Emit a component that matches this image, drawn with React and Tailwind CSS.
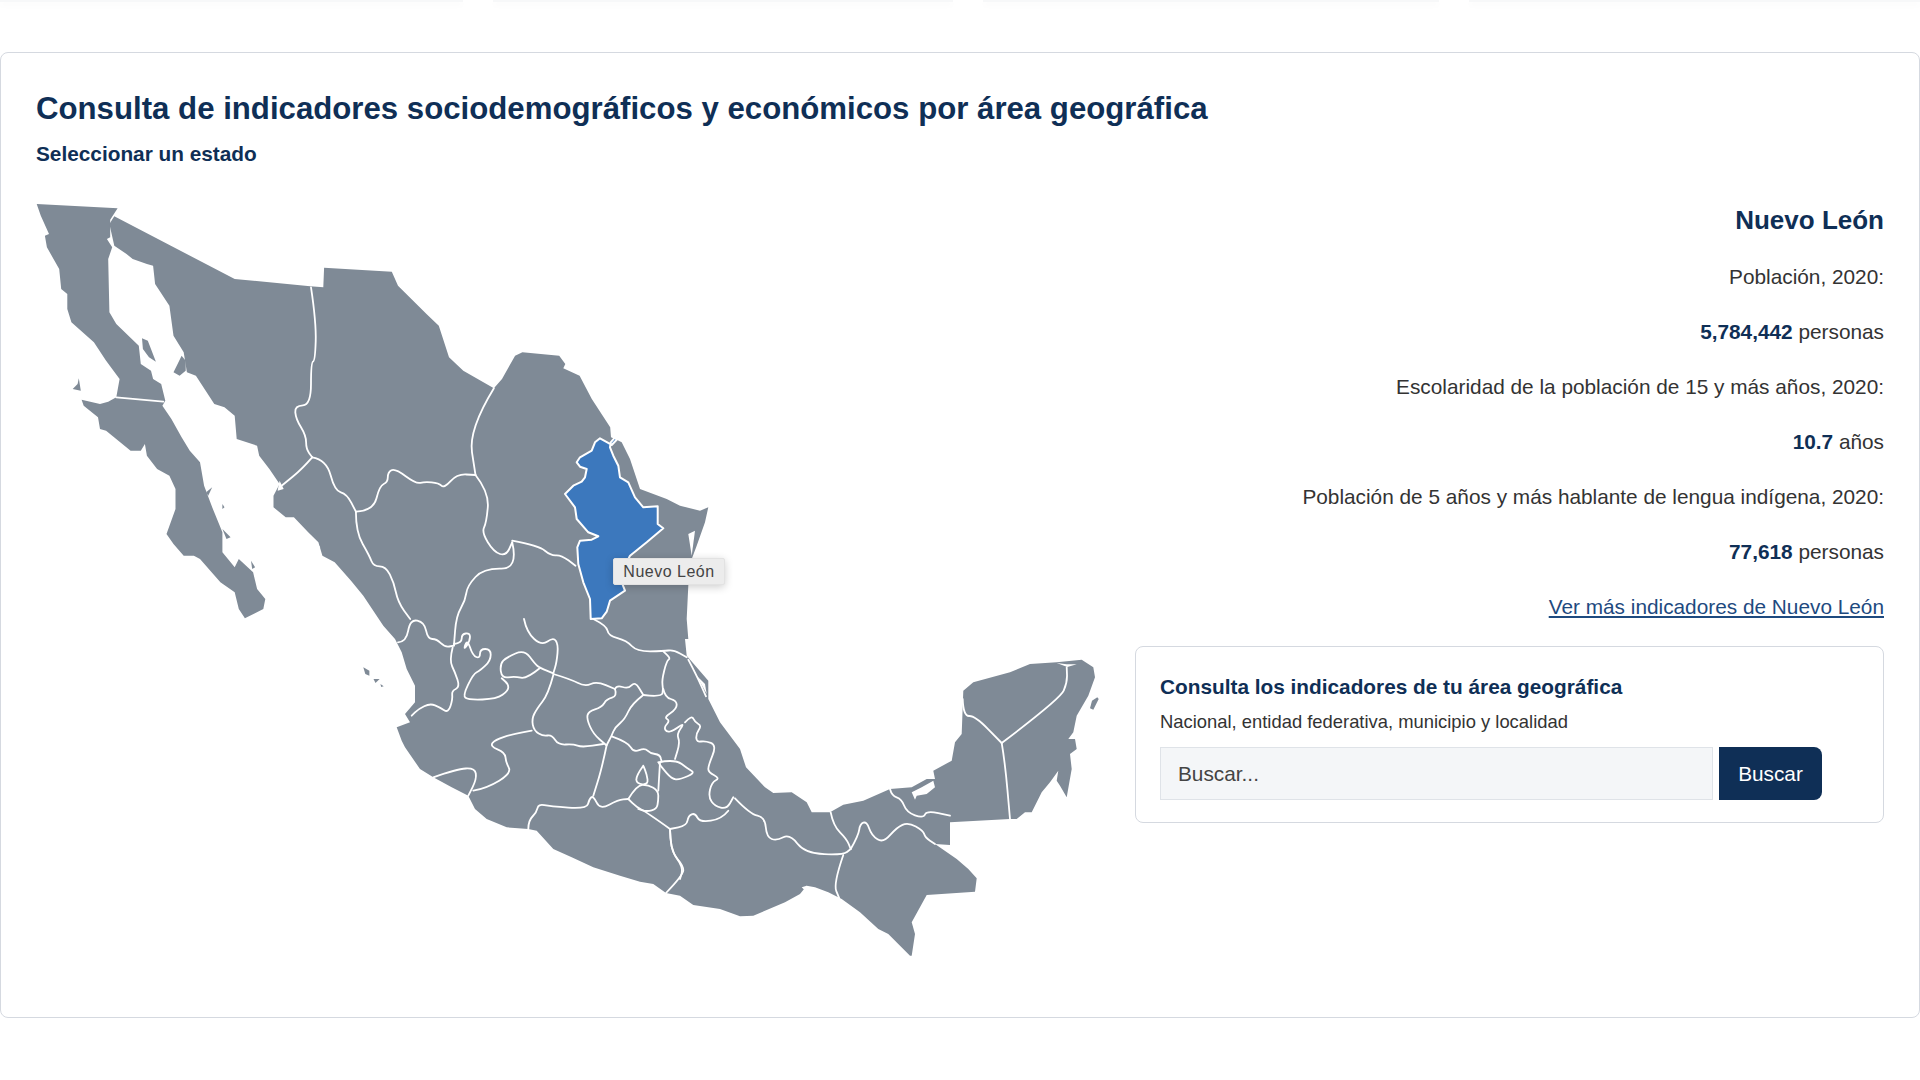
const toPoints = (fx, ox, fy, oy, str) =>
  str.trim().split(/\s+/).map((p) => {
    const [x, y] = p.split(',').map(Number);
    return [ox + x / fx, oy + y / fy];
  });

// Each helper reads points traced on one crop of the map
const a = (s) => toPoints(2.45, 0, 3, 180, s);
const b = (s) => toPoints(3, 380, 3, 620, s);
const c = (s) => toPoints(3, 640, 3, 640, s);
const d = (s) => toPoints(3, 520, 3, 420, s);

const poly = (pts) => 'M' + pts.map((p) => `${p[0].toFixed(1)} ${p[1].toFixed(1)}`).join('L') + 'Z';

// Rounded line through the midpoints
const curve = (pts) => {
  let out = `M${pts[0][0].toFixed(1)} ${pts[0][1].toFixed(1)}`;
  for (let i = 1; i < pts.length - 1; i++) {
    const mx = (pts[i][0] + pts[i + 1][0]) / 2;
    const my = (pts[i][1] + pts[i + 1][1]) / 2;
    out += `Q${pts[i][0].toFixed(1)} ${pts[i][1].toFixed(1)} ${mx.toFixed(1)} ${my.toFixed(1)}`;
  }
  const last = pts[pts.length - 1];
  return out + `L${last[0].toFixed(1)} ${last[1].toFixed(1)}`;
};

const baja = a(`90,75 288,88 270,122 270,175 262,180 275,205 265,240 268,400 285,435 340,500 345,555 370,575 375,600 395,615 405,665
  398,680 420,720 445,775 465,815 490,850 500,920 520,985 545,1060 545,1120 575,1165 585,1140 620,1180 630,1230 650,1260 645,1290
  600,1318 585,1290 575,1240 540,1210 490,1140 475,1130 450,1130 425,1095 408,1065 430,990 430,930 415,890 385,870 360,830 355,795
  345,815 320,815 260,755 245,750 240,715 205,680 200,662 245,675 265,668 285,655 293,600 260,545 230,490 175,430 165,390 165,345
  150,330 145,270 115,205 110,170 120,165 100,110`);

const mainland = [
  ...a(`280,112 575,300 760,322 792,325 794,266 960,278 975,320 1045,405 1075,440 1100,535 1135,575 1210,628 1230,600 1262,530 1280,520
    1370,530 1385,555 1380,568 1420,590 1450,660 1495,745 1497,775`),
  ...d(`290,62 305,70 330,120 360,210 440,240 480,260 540,275 565,265 555,310 530,380 515,420 505,500 500,600 505,660`),
  ...c(`135,0 140,50 205,125 205,180 240,250 300,330 318,385 375,445 400,462 455,460 500,490 515,520 570,520 610,497 670,485 750,450 815,445
    860,420 885,420 880,395 935,365 945,310 965,285 970,155 1000,130 1110,100 1170,75 1250,70 1325,62 1360,85 1365,115 1345,170 1310,230
    1300,280 1285,300 1305,300 1310,330 1290,345 1295,390 1280,475 1260,440 1250,425 1255,395 1230,430 1205,460 1175,520 1155,520 1130,540
    1110,540 930,550 930,618 885,615 950,660 985,690 1010,718 1005,758 860,768 815,850 825,885 815,950 810,950 745,885 715,870 660,820
    605,780 565,760 525,745 500,740 480,765 435,790 340,830 300,832 240,810 160,798 120,770 78,762 40,735 0,728`),
  ...b(`720,770 640,745 575,715 520,690 470,635 445,630 380,625 320,600 285,570 265,530 215,505 160,475 120,450 75,385 65,365 50,325 90,310
    75,285 105,250 105,200 80,150 65,100 45,60 10,20`),
  ...a(`890,1250 860,1205 820,1150 790,1130 780,1090 755,1060 720,1015 700,1015 670,985 670,950 685,915 660,870 635,830 630,800 580,780 575,710
    550,685 525,675 480,590 458,580 450,520 425,470 415,380 380,315 375,260 360,255 325,240 310,225 280,200 268,135`),
];

const islands = [
  a('445,530 455,545 455,575 440,590 425,580 435,555'),
  a('348,478 362,485 370,510 382,548 365,535 350,510'),
  a('193,598 198,635 178,630 190,615'),
  a('520,925 510,950 505,940'),
  a('545,975 550,985 545,990'),
  a('545,1050 565,1075 555,1080'),
  a('615,1145 625,1165 618,1170'),
  a('890,1465 905,1475 905,1490 895,1485'),
  a('915,1500 930,1500 920,1512'),
  a('932,1515 940,1522 934,1524'),
  c('1372,175 1376,180 1360,212 1350,208 1356,185'),
];

const water = [
  c('815,460 845,445 880,425 885,445 860,465 830,470 825,482'),
  c('1250,72 1282,84 1310,76 1280,76'),
  c('485,745 500,740 515,750 530,748 500,760'),
  b('950,170 975,195 980,225'),
  d('505,345 525,335 515,410'),
  a('762,1075 785,1105 775,1110'),
  a('285,215 300,235 285,240'),
  a('685,905 695,930 680,935'),
];

const borders = [
  // north west
  a('285,655 400,668'),
  a('762,325 775,430 772,545 762,550 762,678 722,680 725,720 750,770 750,810 765,835'),
  a('765,835 740,870 695,915 685,925'),
  a('765,835 800,842 820,935 850,945 872,998'),
  a('872,998 915,995 930,920 950,910 950,880 968,868 1020,915 1040,908 1075,912 1088,928 1120,885 1165,888'),
  a('1210,628 1148,752 1165,888'),
  a('1165,888 1198,940 1192,1030 1180,1060 1210,1120 1240,1130 1255,1090'),
  a('1255,1090 1270,1170 1185,1168 1145,1220 1140,1265 1118,1310 1112,1400'),
  a('1255,1085 1320,1100 1350,1130 1375,1128 1410,1160'),
  a('872,998 872,1060 905,1130 915,1162 945,1162 965,1210 975,1270 1005,1320'),
  a('975,1390 995,1390 1005,1320 1040,1330 1048,1380 1070,1380 1090,1405 1112,1400'),
  // centre
  b('218,85 208,125 225,160 240,205 215,215 218,240 205,282 180,265 150,253 115,270 95,290'),
  b('160,475 230,450 285,447 290,480 265,530'),
  b('280,515 320,508 395,462 378,430 375,400 330,382 345,362 400,345 455,335'),
  b('222,75 245,72 245,45 270,42 270,65 250,95 262,60 278,110 300,118 300,90 332,90 332,125 300,155 280,165 248,230 265,243 350,240 385,215 385,195 365,178'),
  b('480,147 440,180 405,172 365,178 360,135 380,115 433,92 465,135 480,147 520,163'),
  b('432,0 440,40 485,80 520,55 535,75 530,130 520,163'),
  b('520,168 505,225 470,270 455,300 462,335 490,352 515,347 535,378 580,375 605,385 670,375'),
  b('520,165 570,180 615,203 650,187 705,210'),
  b('705,210 712,232 680,240 665,265 625,277 620,300 640,345 678,378'),
  b('705,210 710,198 745,210 765,187 790,228'),
  b('790,228 755,255 735,300 705,325 695,350 680,378'),
  b('790,228 845,235 850,210 845,185 860,125 872,118 850,97'),
  b('640,0 680,20 685,50 740,65 770,97 850,97 880,92 920,115'),
  b('925,122 950,170 978,232'),
  b('850,210 855,235 890,245 890,270 852,295 870,305 852,325 860,340 880,335 915,310 890,345 900,370 885,420'),
  b('915,310 935,288 945,310 965,320 948,345 950,370 975,365 1010,378 985,440 985,460 1020,478 995,490 985,535 1005,562 1040,570 1060,535'),
  b('1045,575 1025,600 960,610 945,582 925,590 920,620 870,630'),
  b('870,630 870,690 910,745 900,780'),
  b('870,630 800,580 770,565 745,540'),
  b('680,378 665,450 640,530'),
  b('445,630 445,605 470,580 475,555 510,562 620,570 628,540 640,530 660,572 715,542 745,540'),
  b('695,352 745,370 760,400 795,387 810,403 840,407 845,428'),
  b('790,440 768,470 770,495 805,497 800,465 790,440'),
  b('745,540 770,498 805,497 835,515 835,545 830,570 800,578 775,570'),
  b('835,430 885,420 925,450 945,462 900,482 875,480 845,445 835,430'),
  b('840,430 835,515'),
  // south east
  c('78,762 130,708 130,680 95,640 90,570'),
  c('572,520 580,560 620,600 632,630'),
  c('632,630 655,590 660,555 680,547 695,590 730,612 770,565 805,550 850,575 855,595 885,615'),
  c('610,648 580,735 598,778'),
  c('285,478 330,525 375,535 380,595 410,605 450,585 495,643 610,648 632,630'),
  c('750,450 755,470 785,480 800,520 850,538 860,515 930,530'),
  c('968,180 970,232 1005,230 1085,312'),
  c('1085,312 1260,180 1282,130 1280,85'),
  c('1085,312 1095,370 1110,540'),
];

const nuevoLeon = d(`240,58 225,70 215,95 180,115 170,130 180,143 200,150 195,175 185,188 160,200 135,225 165,265 170,300 205,340 235,352
  215,362 180,365 172,385 175,435 190,490 210,540 212,600 245,598 260,578 270,545 315,515 305,490 300,470 330,410 380,370 430,328 413,315
  413,262 370,265 345,235 325,190 300,175 295,140 280,110 270,85 272,70 285,55 290,62 275,78 262,70`);

const MexicoMap = () => (
  <svg viewBox="36 190 1099 790" className="block w-[1099px] h-[790px] shrink-0">
    <g fill="#7f8a96">
      <path d={poly(baja)} />
      <path d={poly(mainland)} />
      {islands.map((pts, i) => (
        <path key={i} d={poly(pts)} />
      ))}
    </g>
    <g fill="#ffffff">
      {water.map((pts, i) => (
        <path key={i} d={poly(pts)} />
      ))}
    </g>
    <g fill="none" stroke="#ffffff" strokeWidth="1.8" strokeLinejoin="round" strokeLinecap="round">
      {borders.map((pts, i) => (
        <path key={i} d={curve(pts)} />
      ))}
    </g>
    <path d={poly(nuevoLeon)} fill="#3c78bd" stroke="#ffffff" strokeWidth="2" strokeLinejoin="round" />
  </svg>
);

const Stat = ({ children }) => (
  <p className="text-[20.8px] leading-[30px] text-[#333333] mb-[25px]">{children}</p>
);

const Value = ({ children }) => <strong className="font-bold text-[#0f2f56]">{children}</strong>;

const App = () => {
  return (
    <div className="w-full min-h-[1080px] bg-white font-['Liberation_Sans',Arial,sans-serif]">
      <div className="h-[52px] flex gap-[30px]">
        <div className="w-[463px] h-0.5 bg-[#f7f8f9] shadow-[0_3px_6px_rgba(0,0,0,0.04)]"></div>
        <div className="w-[460px] h-0.5 bg-[#f7f8f9] shadow-[0_3px_6px_rgba(0,0,0,0.04)]"></div>
        <div className="w-[456px] h-0.5 bg-[#f7f8f9] shadow-[0_3px_6px_rgba(0,0,0,0.04)]"></div>
        <div className="flex-1 h-0.5 bg-[#f7f8f9] shadow-[0_3px_6px_rgba(0,0,0,0.04)]"></div>
      </div>

      <div className="h-[966px] border border-[#d5d9e0] rounded-lg px-[35px] pt-[36px]">
        <h1 className="text-[31.2px] leading-[40px] font-bold text-[#0f2f56]">
          Consulta de indicadores sociodemográficos y económicos por área geográfica
        </h1>
        <h2 className="mt-[11px] text-[20.8px] leading-[28px] font-bold text-[#0f2f56]">Seleccionar un estado</h2>

        <div className="relative flex mt-[21px]">
          <MexicoMap />

          <div className="absolute left-[577px] top-[369px] px-[8px] h-[27px] w-[112px] flex items-center justify-center bg-[#ececec] border border-[#e2e2e2] rounded-[2px] shadow-[0_2px_8px_rgba(0,0,0,0.2)] text-[16px] tracking-[0.5px] text-[#444444]">
            Nuevo León
          </div>

          <div className="flex-1 text-right pt-[13px]">
            <h3 className="text-[26px] leading-[36px] font-bold text-[#0f2f56] mb-[24px]">Nuevo León</h3>
            <Stat>Población, 2020:</Stat>
            <Stat>
              <Value>5,784,442</Value> personas
            </Stat>
            <Stat>Escolaridad de la población de 15 y más años, 2020:</Stat>
            <Stat>
              <Value>10.7</Value> años
            </Stat>
            <Stat>Población de 5 años y más hablante de lengua indígena, 2020:</Stat>
            <Stat>
              <Value>77,618</Value> personas
            </Stat>
            <a href="#" className="block text-[20.8px] leading-[30px] text-[#1e4a7f] underline mb-[24px]">
              Ver más indicadores de Nuevo León
            </a>

            <div className="border border-[#d5d9e0] rounded-lg h-[177px] px-[24px] pt-[25px] text-left">
              <h4 className="text-[20.8px] leading-[30px] font-bold text-[#0f2f56]">
                Consulta los indicadores de tu área geográfica
              </h4>
              <p className="mt-[7px] text-[18.4px] leading-[26px] text-[#333333]">
                Nacional, entidad federativa, municipio y localidad
              </p>
              <div className="flex gap-[6px] mt-[12px]">
                <input
                  placeholder="Buscar..."
                  className="w-[553px] h-[53px] px-[17px] bg-[#f4f6f8] border border-[#dfe3e8] text-[20.8px] text-[#444444] placeholder:text-[#444444] outline-none"
                />
                <button className="w-[103px] h-[53px] bg-[#0f2f56] text-white text-[20.8px] rounded-r-lg">Buscar</button>
              </div>
            </div>
          </div>
        </div>
      </div>
    </div>
  );
};

export default App;
